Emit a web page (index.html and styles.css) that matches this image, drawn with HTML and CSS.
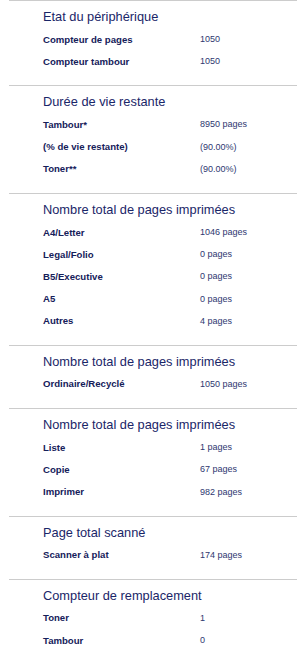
FILE: index.html
```html
<!DOCTYPE html>
<html lang="fr">
<head>
<meta charset="utf-8">
<title>Compteurs</title>
<link rel="stylesheet" href="styles.css">
</head>
<body>
<div class="page">
  <section class="sec">
    <h2 class="title">Etat du périphérique</h2>
    <dl class="rows">
      <dt>Compteur de pages</dt><dd>1050</dd>
      <dt>Compteur tambour</dt><dd>1050</dd>
    </dl>
  </section>
  <section class="sec">
    <h2 class="title">Durée de vie restante</h2>
    <dl class="rows">
      <dt>Tambour*</dt><dd>8950 pages</dd>
      <dt>(% de vie restante)</dt><dd>(90.00%)</dd>
      <dt>Toner**</dt><dd>(90.00%)</dd>
    </dl>
  </section>
  <section class="sec">
    <h2 class="title">Nombre total de pages imprimées</h2>
    <dl class="rows">
      <dt>A4/Letter</dt><dd>1046 pages</dd>
      <dt>Legal/Folio</dt><dd>0 pages</dd>
      <dt>B5/Executive</dt><dd>0 pages</dd>
      <dt>A5</dt><dd>0 pages</dd>
      <dt>Autres</dt><dd>4 pages</dd>
    </dl>
  </section>
  <section class="sec">
    <h2 class="title">Nombre total de pages imprimées</h2>
    <dl class="rows">
      <dt>Ordinaire/Recyclé</dt><dd>1050 pages</dd>
    </dl>
  </section>
  <section class="sec">
    <h2 class="title">Nombre total de pages imprimées</h2>
    <dl class="rows">
      <dt>Liste</dt><dd>1 pages</dd>
      <dt>Copie</dt><dd>67 pages</dd>
      <dt>Imprimer</dt><dd>982 pages</dd>
    </dl>
  </section>
  <section class="sec">
    <h2 class="title">Page total scanné</h2>
    <dl class="rows">
      <dt>Scanner à plat</dt><dd>174 pages</dd>
    </dl>
  </section>
  <section class="sec">
    <h2 class="title">Compteur de remplacement</h2>
    <dl class="rows">
      <dt>Toner</dt><dd>1</dd>
      <dt>Tambour</dt><dd>0</dd>
    </dl>
  </section>
</div>
</body>
</html>
```
FILE: styles.css
```css
html, body {
  margin: 0;
  padding: 0;
  background: #ffffff;
}
body {
  font-family: "Liberation Sans", Arial, sans-serif;
}
.page {
  display: flex;
  flex-direction: column;
  padding-left: 9px;
}
.sec {
  border-top: 1px solid #cccccc;
  padding: 8px 0 13px 34px;
}
.title {
  margin: 0;
  font-size: 12.8px;
  line-height: 16px;
  font-weight: normal;
  color: #1a2668;
}
.rows {
  margin: 3px 0 0 0;
  display: grid;
  grid-template-columns: 157px 1fr;
  grid-auto-rows: 22.2px;
  align-items: center;
}
.rows dt {
  font-size: 9.6px;
  font-weight: bold;
  color: #15205a;
}
.rows dd {
  margin: 0;
  font-size: 9px;
  color: #2e3770;
}
```
